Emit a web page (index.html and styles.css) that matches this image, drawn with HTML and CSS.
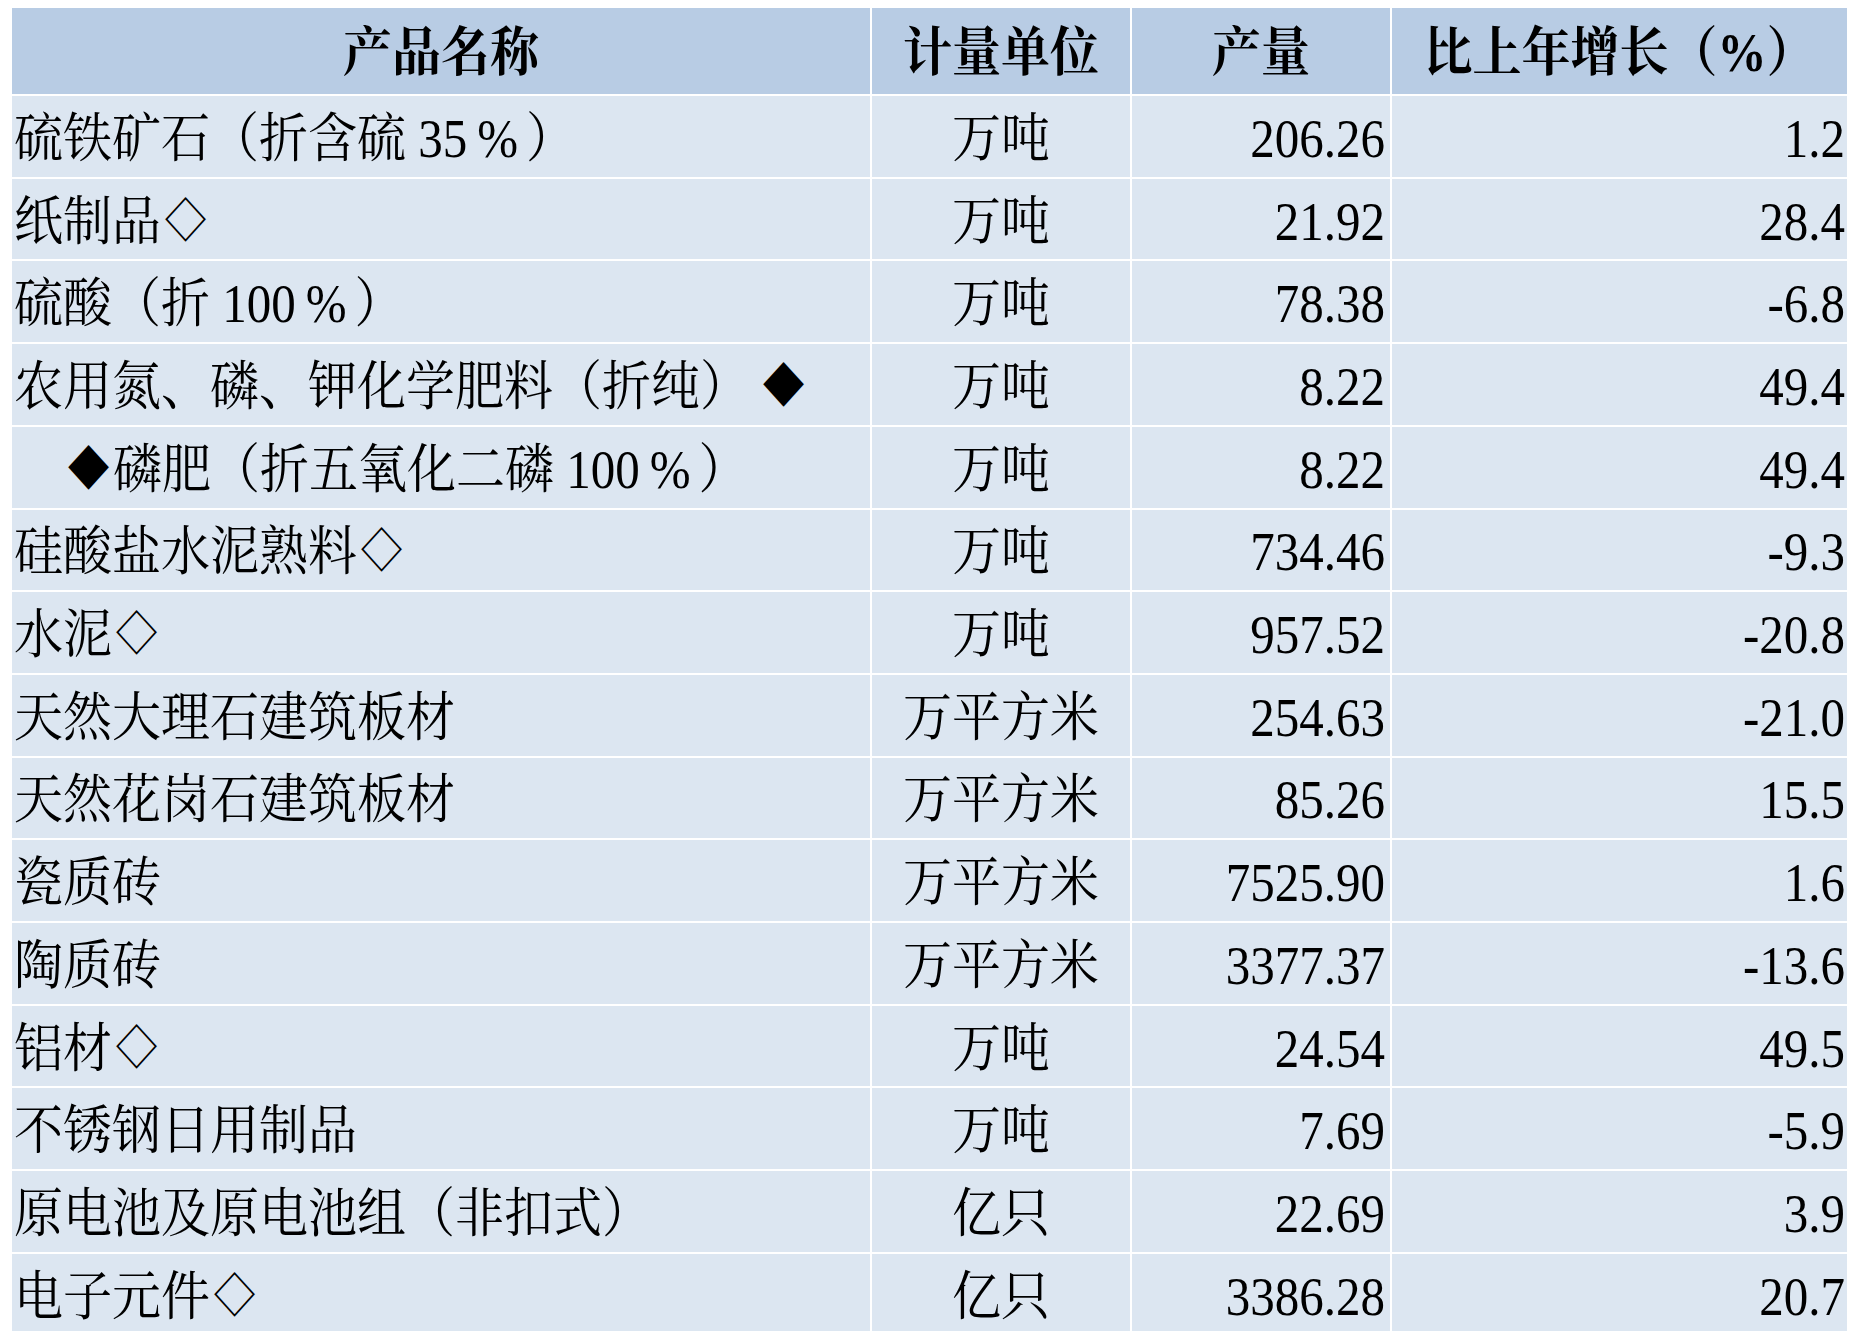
FILE: index.html
```html
<!DOCTYPE html>
<html lang="zh-CN">
<head>
<meta charset="utf-8">
<title>产品产量</title>
<link rel="stylesheet" href="styles.css">
</head>
<body>
<div class="table">
  <div class="cell head"><span class="t">产品名称</span></div>
  <div class="cell head"><span class="t">计量单位</span></div>
  <div class="cell head"><span class="t">产量</span></div>
  <div class="cell head"><span class="t">比上年增长（%）</span></div>

  <div class="cell name"><span class="t">硫铁矿石（折含硫 35<span class="pc">%</span>）</span></div>
  <div class="cell unit"><span class="t">万吨</span></div>
  <div class="cell num"><span class="t">206.26</span></div>
  <div class="cell pct"><span class="t">1.2</span></div>

  <div class="cell name"><span class="t">纸制品<span class="dm">◇</span></span></div>
  <div class="cell unit"><span class="t">万吨</span></div>
  <div class="cell num"><span class="t">21.92</span></div>
  <div class="cell pct"><span class="t">28.4</span></div>

  <div class="cell name"><span class="t">硫酸（折 100<span class="pc">%</span>）</span></div>
  <div class="cell unit"><span class="t">万吨</span></div>
  <div class="cell num"><span class="t">78.38</span></div>
  <div class="cell pct"><span class="t">-6.8</span></div>

  <div class="cell name"><span class="t">农用氮、磷、钾化学肥料（折纯）<span class="dm sp">◆</span></span></div>
  <div class="cell unit"><span class="t">万吨</span></div>
  <div class="cell num"><span class="t">8.22</span></div>
  <div class="cell pct"><span class="t">49.4</span></div>

  <div class="cell name indent"><span class="t"><span class="dm">◆</span>磷肥（折五氧化二磷 100<span class="pc">%</span>）</span></div>
  <div class="cell unit"><span class="t">万吨</span></div>
  <div class="cell num"><span class="t">8.22</span></div>
  <div class="cell pct"><span class="t">49.4</span></div>

  <div class="cell name"><span class="t">硅酸盐水泥熟料<span class="dm">◇</span></span></div>
  <div class="cell unit"><span class="t">万吨</span></div>
  <div class="cell num"><span class="t">734.46</span></div>
  <div class="cell pct"><span class="t">-9.3</span></div>

  <div class="cell name"><span class="t">水泥<span class="dm">◇</span></span></div>
  <div class="cell unit"><span class="t">万吨</span></div>
  <div class="cell num"><span class="t">957.52</span></div>
  <div class="cell pct"><span class="t">-20.8</span></div>

  <div class="cell name"><span class="t">天然大理石建筑板材</span></div>
  <div class="cell unit"><span class="t">万平方米</span></div>
  <div class="cell num"><span class="t">254.63</span></div>
  <div class="cell pct"><span class="t">-21.0</span></div>

  <div class="cell name"><span class="t">天然花岗石建筑板材</span></div>
  <div class="cell unit"><span class="t">万平方米</span></div>
  <div class="cell num"><span class="t">85.26</span></div>
  <div class="cell pct"><span class="t">15.5</span></div>

  <div class="cell name"><span class="t">瓷质砖</span></div>
  <div class="cell unit"><span class="t">万平方米</span></div>
  <div class="cell num"><span class="t">7525.90</span></div>
  <div class="cell pct"><span class="t">1.6</span></div>

  <div class="cell name"><span class="t">陶质砖</span></div>
  <div class="cell unit"><span class="t">万平方米</span></div>
  <div class="cell num"><span class="t">3377.37</span></div>
  <div class="cell pct"><span class="t">-13.6</span></div>

  <div class="cell name"><span class="t">铝材<span class="dm">◇</span></span></div>
  <div class="cell unit"><span class="t">万吨</span></div>
  <div class="cell num"><span class="t">24.54</span></div>
  <div class="cell pct"><span class="t">49.5</span></div>

  <div class="cell name"><span class="t">不锈钢日用制品</span></div>
  <div class="cell unit"><span class="t">万吨</span></div>
  <div class="cell num"><span class="t">7.69</span></div>
  <div class="cell pct"><span class="t">-5.9</span></div>

  <div class="cell name"><span class="t">原电池及原电池组（非扣式）</span></div>
  <div class="cell unit"><span class="t">亿只</span></div>
  <div class="cell num"><span class="t">22.69</span></div>
  <div class="cell pct"><span class="t">3.9</span></div>

  <div class="cell name"><span class="t">电子元件<span class="dm">◇</span></span></div>
  <div class="cell unit"><span class="t">亿只</span></div>
  <div class="cell num"><span class="t">3386.28</span></div>
  <div class="cell pct"><span class="t">20.7</span></div>
</div>
</body>
</html>
```
FILE: styles.css
```css
html, body {
  margin: 0;
  padding: 0;
  background: #ffffff;
  overflow: hidden;
  height: 1331px;
}

body {
  font-family: "Liberation Serif", "Noto Serif CJK SC", "Noto Sans CJK SC", serif;
  color: #000000;
}

.table {
  display: grid;
  grid-template-columns: 858px 258px 258px 455px;
  grid-template-rows: 86px;
  grid-auto-rows: 80.71px;
  gap: 2px;
  padding: 8px 0 0 12px;
}

.cell {
  background: #dce6f1;
  display: flex;
  align-items: center;
  font-size: 49px;
  line-height: 1;
  white-space: nowrap;
  overflow: hidden;
}

.t {
  display: inline-block;
  transform: scaleY(1.1) translateY(2px);
}

.pc {
  display: inline-block;
  margin: 0 8px 0 10px;
}

.dm {
  display: inline-block;
  transform: scale(0.85);
}

.sp {
  margin-left: 10px;
}

.head {
  background: #b8cce4;
  justify-content: center;
  font-weight: 700;
}

.head .t {
  transform: scaleY(1.1) translateY(1px);
}

.name {
  justify-content: flex-start;
  padding-left: 2px;
}

.indent {
  padding-left: 52px;
}

.unit {
  justify-content: center;
}

.num {
  justify-content: flex-end;
  padding-right: 5px;
}

.pct {
  justify-content: flex-end;
  padding-right: 2px;
}
```
